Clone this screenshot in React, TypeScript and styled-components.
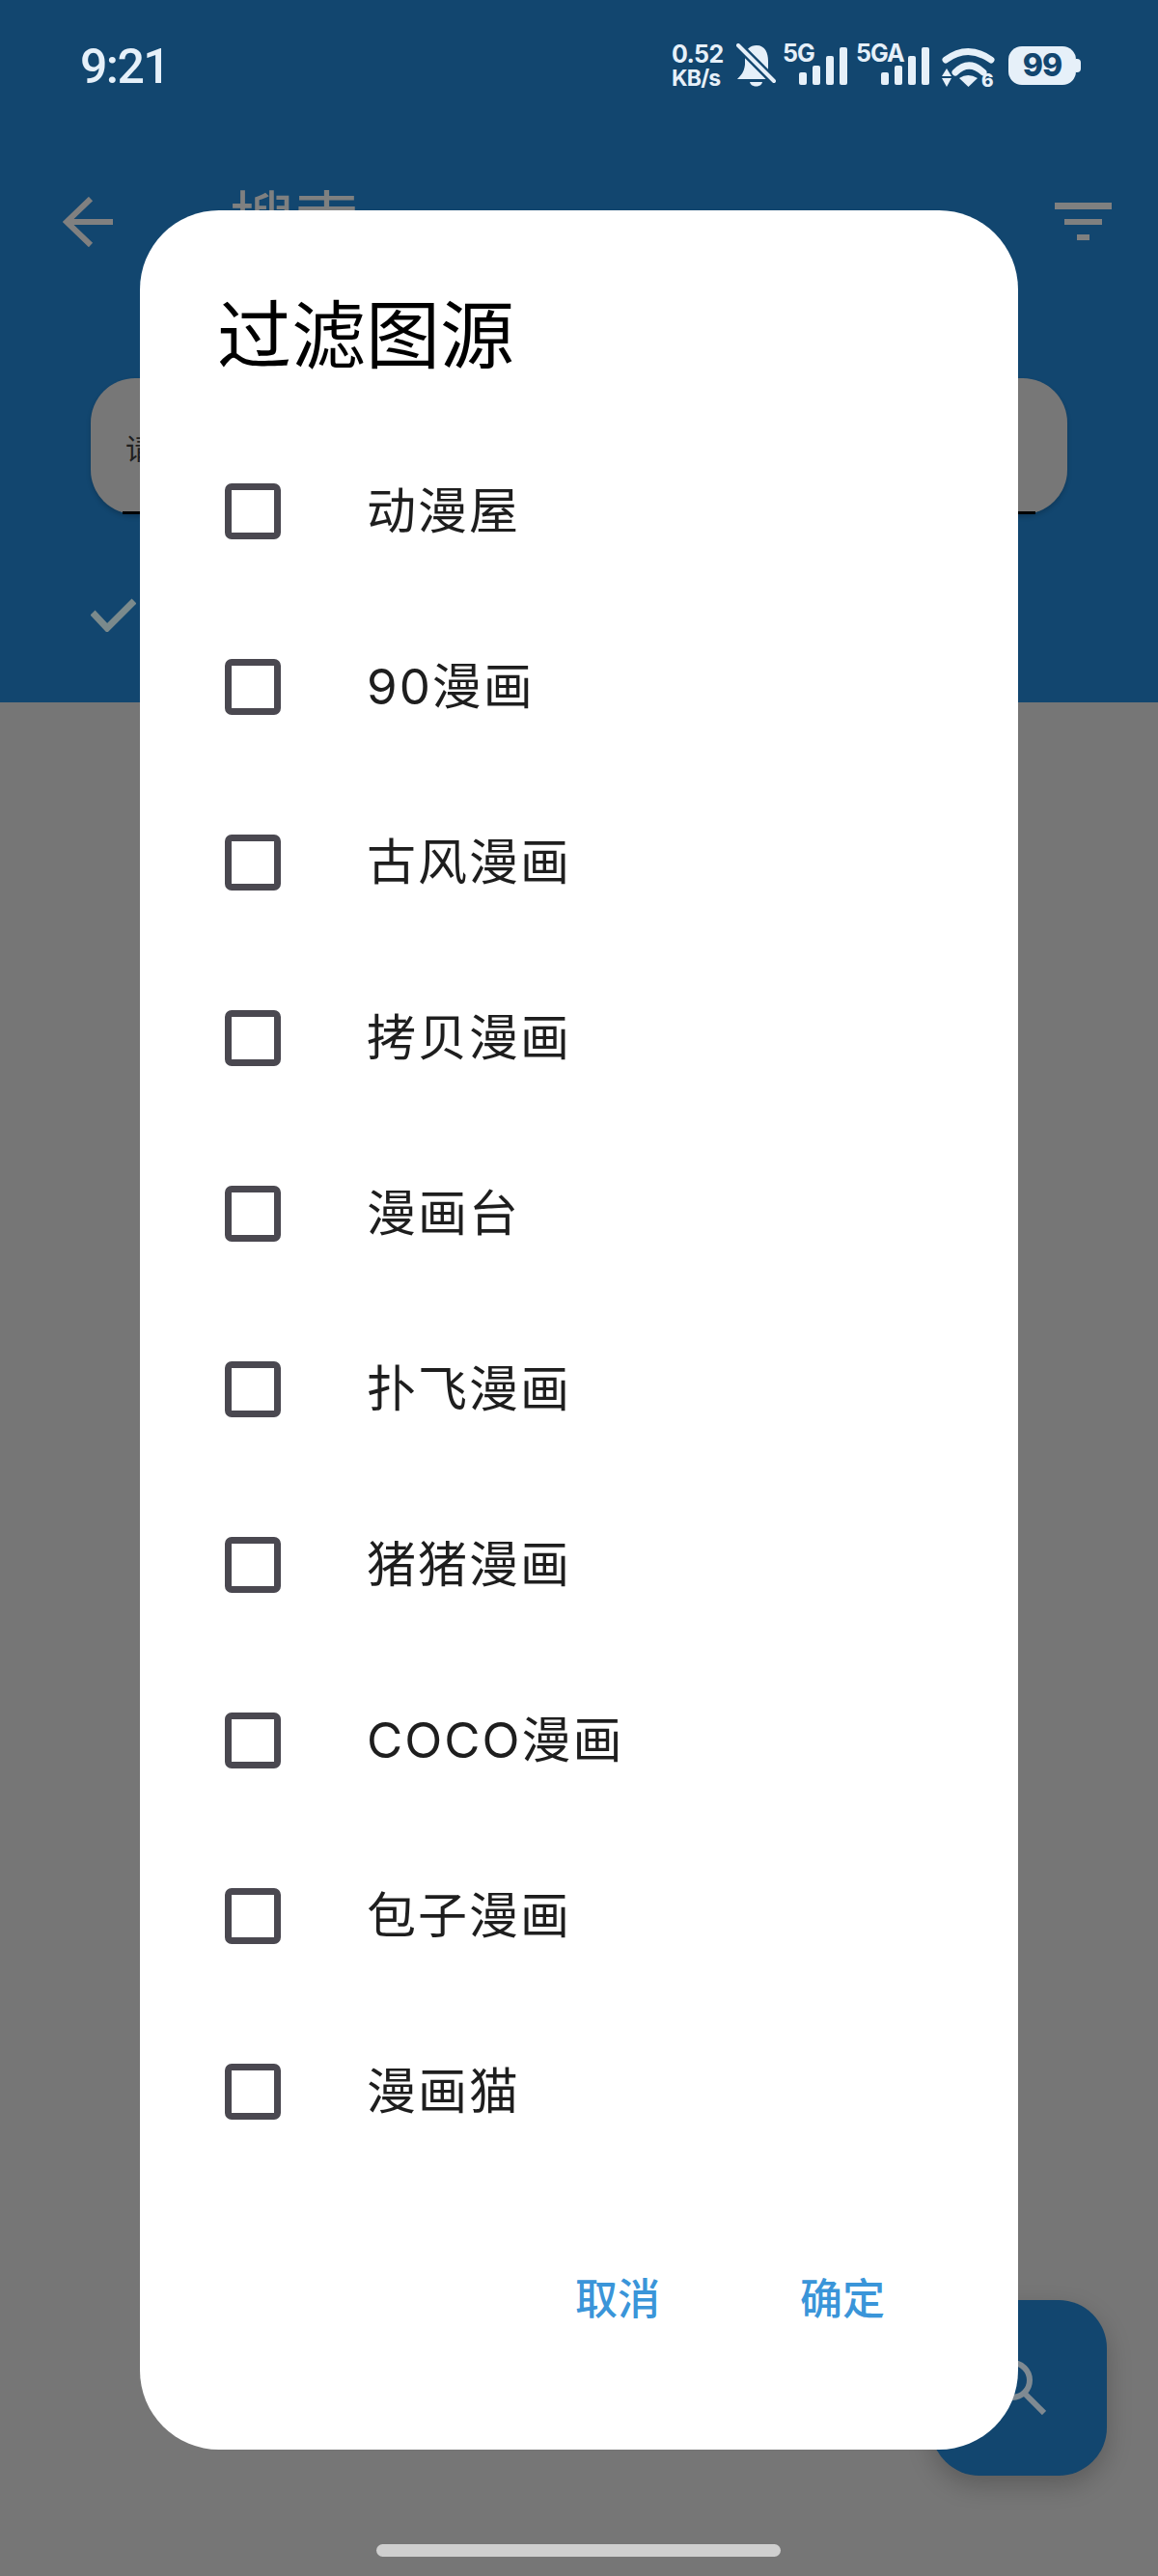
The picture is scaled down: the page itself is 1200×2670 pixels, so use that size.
import React from "react";
import styled, { createGlobalStyle } from "styled-components";

const Global = createGlobalStyle`
  html, body { margin: 0; padding: 0; background: #767676; }
  * { box-sizing: border-box; }
`;

const cjk = `Inter, "Noto Sans CJK SC", sans-serif`;

const Page = styled.div`
  position: relative;
  width: 1200px;
  height: 2670px;
  overflow: hidden;
  background: #767676;
  font-family: ${cjk};
`;

const Header = styled.header`
  height: 728px;
  background: #12466f;
`;

const StatusBar = styled.div`
  height: 136px;
  padding: 45px 80px 0 83px;
  display: flex;
  justify-content: space-between;
  align-items: flex-start;
  color: #e6f0f9;
`;

const Clock = styled.div`
  font-family: Roboto, sans-serif;
  font-size: 50px;
  font-weight: 500;
  line-height: 48px;
  letter-spacing: -1.6px;
`;

const StatusIcons = styled.div`
  display: flex;
  align-items: flex-start;
`;

const NetSpeed = styled.div`
  width: 54px;
  font-family: Inter, sans-serif;
  font-weight: 700;
  display: flex;
  flex-direction: column;
  margin-top: -2px;
`;

const SpeedValue = styled.span`
  font-size: 25px;
  line-height: 26px;
  letter-spacing: -0.6px;
`;

const SpeedUnit = styled.span`
  font-size: 23px;
  line-height: 22px;
  letter-spacing: -0.8px;
  margin-top: 1px;
`;

const BellIcon = styled.svg`
  width: 41px;
  height: 45px;
  margin-left: 13px;
`;

const Signal = styled.div<{ $w: number; $gap: number }>`
  width: ${(p) => p.$w}px;
  height: 43px;
  margin-left: ${(p) => p.$gap}px;
  display: grid;
`;

const SignalLabel = styled.span`
  grid-area: 1 / 1;
  justify-self: start;
  align-self: start;
  font-family: Inter, sans-serif;
  font-size: 25px;
  font-weight: 700;
  line-height: 20px;
  letter-spacing: -1px;
`;

const SignalBars = styled.svg`
  grid-area: 1 / 1;
  justify-self: end;
  align-self: end;
  width: 50px;
  height: 39px;
`;

const WifiIcon = styled.svg`
  width: 55px;
  height: 41px;
  margin-left: 13px;
  margin-top: 4px;
  overflow: visible;
`;

const Battery = styled.div`
  position: relative;
  width: 70px;
  height: 40px;
  margin-left: 14px;
  margin-right: 5px;
  margin-top: 3px;
  border-radius: 14px;
  background: #e6f0f9;
  color: #12466f;
  font-family: Inter, sans-serif;
  font-size: 32px;
  font-weight: 800;
  line-height: 40px;
  letter-spacing: -1px;
  text-align: center;
  &::after {
    content: "";
    position: absolute;
    right: -5px;
    top: 13px;
    width: 5px;
    height: 14px;
    border-radius: 0 4px 4px 0;
    background: #e6f0f9;
  }
`;

const AppBar = styled.div`
  height: 188px;
  padding: 0 48px 0 65px;
  display: flex;
  align-items: center;
`;

const BackIcon = styled.svg`
  width: 54px;
  height: 52px;
`;

const AppTitle = styled.div`
  margin-left: 119px;
  flex: 1;
  font-size: 67px;
  line-height: 80px;
  color: #7f8080;
`;

const FilterIcon = styled.svg`
  width: 59px;
  height: 40px;
`;

const SearchBar = styled.div`
  position: relative;
  margin: 68px 94px 0;
  height: 141px;
  padding: 0 36px;
  display: flex;
  align-items: center;
  border-radius: 46px;
  background: #777777;
  box-shadow: 0 3px 5px rgba(0, 0, 0, 0.18);
  font-size: 30px;
  color: #1f1f1f;
  &::after {
    content: "";
    position: absolute;
    left: 33px;
    right: 33px;
    bottom: 0;
    height: 3px;
    background: #000;
  }
`;

const OptionRow = styled.div`
  margin: 87px 0 0 94px;
  display: flex;
`;

const CheckIcon = styled.svg`
  width: 47px;
  height: 35px;
`;

const Fab = styled.div`
  position: absolute;
  right: 53px;
  bottom: 104px;
  width: 182px;
  height: 182px;
  border-radius: 50px;
  background: #12466f;
  box-shadow: 0 10px 26px rgba(0, 0, 0, 0.22);
  display: flex;
  align-items: center;
  justify-content: center;
`;

const SearchIcon = styled.svg`
  width: 56px;
  height: 56px;
`;

const HomeBar = styled.div`
  position: absolute;
  left: 390px;
  right: 391px;
  bottom: 20px;
  height: 13px;
  border-radius: 7px;
  background: #cfcfcf;
`;

const Dialog = styled.section`
  position: absolute;
  left: 145px;
  top: 218px;
  width: 910px;
  height: 2321px;
  border-radius: 82px;
  background: #fff;
  padding-top: 84px;
`;

const DialogTitle = styled.h2`
  margin: 0 0 45px 80px;
  font-size: 77px;
  font-weight: 400;
  line-height: 92px;
  color: #000;
`;

const SourceRow = styled.div`
  height: 182px;
  padding-left: 88px;
  display: flex;
  align-items: center;
  gap: 89px;
`;

const Box = styled.span`
  width: 58px;
  height: 58px;
  border: 7px solid #4a4850;
  border-radius: 7px;
`;

const SourceName = styled.span`
  font-size: 51px;
  font-weight: 400;
  letter-spacing: 2px;
  line-height: 60px;
  color: #1e1e1e;
`;

const Actions = styled.div`
  margin-top: 94px;
  padding-right: 138px;
  display: flex;
  justify-content: flex-end;
  gap: 145px;
`;

const ActionText = styled.span`
  font-size: 44px;
  font-weight: 500;
  line-height: 60px;
  color: #3a95d9;
`;

const sources = ["动漫屋", "90漫画", "古风漫画", "拷贝漫画", "漫画台", "扑飞漫画", "猪猪漫画", "COCO漫画", "包子漫画", "漫画猫"];

const Bars = () => (
  <SignalBars viewBox="0 0 50 39" fill="#e6f0f9">
    <rect x="0" y="26" width="8" height="13" rx="2" />
    <rect x="14" y="19" width="8" height="20" rx="2" />
    <rect x="28" y="9" width="8" height="30" rx="2" />
    <rect x="42" y="0" width="8" height="39" rx="2" />
  </SignalBars>
);

export default function App() {
  return (
    <Page>
      <Global />
      <Header>
        <StatusBar>
          <Clock>9:21</Clock>
          <StatusIcons>
            <NetSpeed>
              <SpeedValue>0.52</SpeedValue>
              <SpeedUnit>KB/s</SpeedUnit>
            </NetSpeed>
            <BellIcon viewBox="0 0 41 45" fill="#e6f0f9">
              <path d="M21 2C30 2 33 10 33 18V31L37 37H1C5 33 8 30 9 22V13C10 6 14 2 21 2Z" />
              <path d="M14 40H27C26 46 15 46 14 40Z" />
              <path d="M-2 -2L38 38" stroke="#12466f" strokeWidth="9" />
              <path d="M2 2L39 39" stroke="#e6f0f9" strokeWidth="4" strokeLinecap="round" />
            </BellIcon>
            <Signal $w={67} $gap={7}>
              <SignalLabel>5G</SignalLabel>
              <Bars />
            </Signal>
            <Signal $w={76} $gap={9}>
              <SignalLabel>5GA</SignalLabel>
              <Bars />
            </Signal>
            <WifiIcon viewBox="0 0 55 41" fill="#e6f0f9">
              <path d="M4 13Q27 -4 51 13" fill="none" stroke="#e6f0f9" strokeWidth="7" strokeLinecap="round" />
              <path d="M14 26Q28 12 43 26" fill="none" stroke="#e6f0f9" strokeWidth="7" strokeLinecap="round" />
              <path d="M18 32Q27 26 37 32L27.5 41Z" />
              <path d="M5 22L10 30H0Z" />
              <path d="M0 32H10L5 41Z" />
              <text x="41" y="41" fontFamily="Inter, sans-serif" fontSize="19" fontWeight="800">6</text>
            </WifiIcon>
            <Battery>99</Battery>
          </StatusIcons>
        </StatusBar>
        <AppBar>
          <BackIcon viewBox="0 0 54 52" fill="none" stroke="#808080" strokeWidth="6">
            <path d="M52 26H4" />
            <path d="M29 2L4 26L29 50" />
          </BackIcon>
          <AppTitle>搜索</AppTitle>
          <FilterIcon viewBox="0 0 59 40" fill="#7f8080">
            <rect x="0" y="0" width="59" height="7" />
            <rect x="10" y="17" width="39" height="6" />
            <rect x="23" y="33" width="13" height="6" />
          </FilterIcon>
        </AppBar>
        <SearchBar>请输入搜索内容</SearchBar>
        <OptionRow>
          <CheckIcon viewBox="0 0 47 35" fill="none" stroke="#7b8a8c" strokeWidth="7">
            <path d="M2 15L17 31L45 3" />
          </CheckIcon>
        </OptionRow>
      </Header>
      <Fab>
        <SearchIcon viewBox="0 0 56 56" fill="none" stroke="#7f8a92" strokeWidth="6">
          <circle cx="21" cy="20" r="18" />
          <path d="M33 33L54 54" />
        </SearchIcon>
      </Fab>
      <HomeBar />
      <Dialog>
        <DialogTitle>过滤图源</DialogTitle>
        {sources.map((s) => (
          <SourceRow key={s}>
            <Box />
            <SourceName>{s}</SourceName>
          </SourceRow>
        ))}
        <Actions>
          <ActionText>取消</ActionText>
          <ActionText>确定</ActionText>
        </Actions>
      </Dialog>
    </Page>
  );
}
